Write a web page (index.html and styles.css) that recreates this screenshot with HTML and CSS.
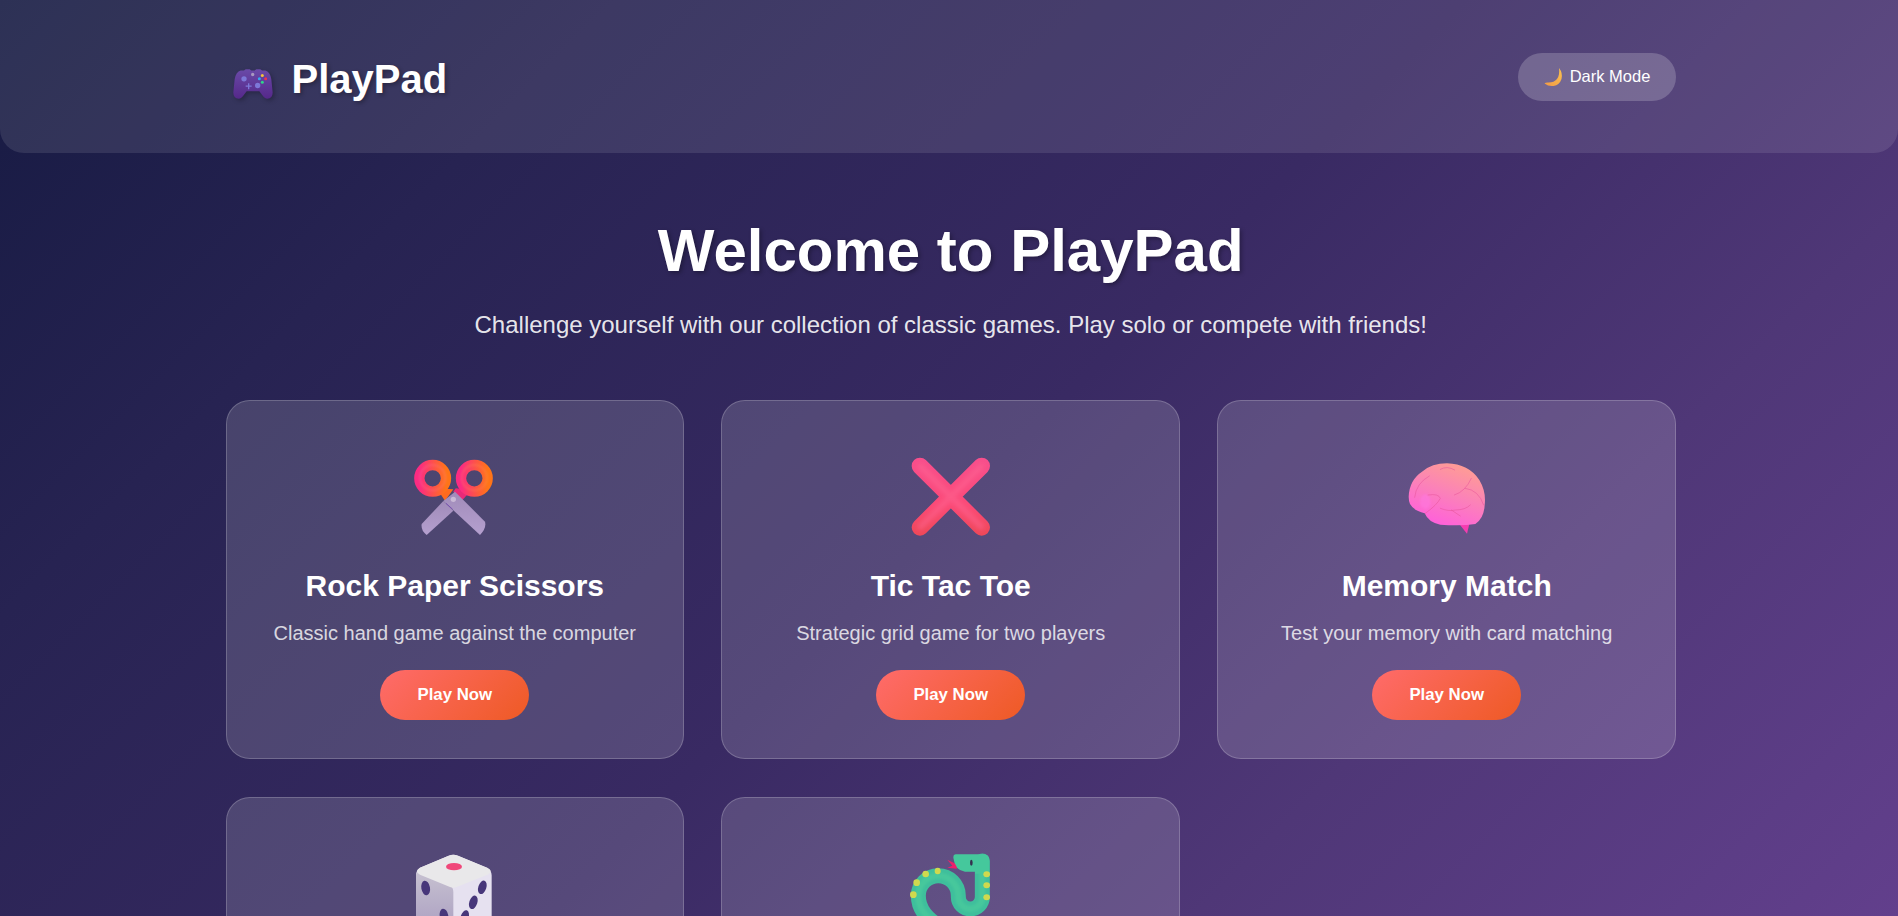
FILE: index.html
```html
<!DOCTYPE html>
<html lang="en">
<head>
<meta charset="utf-8">
<title>PlayPad</title>
<link rel="stylesheet" href="styles.css">
</head>
<body>
<header class="topbar">
  <div class="topbar-inner">
    <div class="logo">
      <svg class="logo-icon" viewBox="78 64.5 180 150" aria-hidden="true">
        <defs>
          <linearGradient id="padGrad" x1="0" y1="0" x2="0" y2="1">
            <stop offset="0" stop-color="#6a4aa8"/><stop offset="1" stop-color="#55288a"/>
          </linearGradient>
        </defs>
        <path d="M122 120h10l5-4h12l5 4h10l5-4h12l5 4h10q14 4 18 26l4 40q0 18-16 19q-8 0-16-12l-8-11h-38l-8 11q-8 12-16 12q-16-1-16-19l4-40q4-22 18-26z" fill="url(#padGrad)"/>
        <circle cx="132" cy="145" r="8" fill="#7d78d8"/>
        <circle cx="173" cy="165" r="8" fill="#7d78d8"/>
        <circle cx="158" cy="132" r="5" fill="#a898c0"/>
        <path d="M146 158v18M137 167h18" stroke="#7d78d8" stroke-width="4" fill="none"/>
        <circle cx="187" cy="135" r="4.500" fill="#f4c33a"/>
        <circle cx="178" cy="145" r="4.500" fill="#35a8f0"/>
        <circle cx="197" cy="145" r="4.500" fill="#f0304f"/>
        <circle cx="187" cy="155" r="4.500" fill="#2fd58a"/>
      </svg>
      <span class="logo-text">PlayPad</span>
    </div>
    <button class="mode-btn" type="button">
      <svg class="mode-icon" viewBox="2 0 22 24" aria-hidden="true">
        <defs>
          <linearGradient id="moonGrad" x1="0" y1="1" x2="1" y2="0">
            <stop offset="0" stop-color="#f29a45"/><stop offset="1" stop-color="#fbc24f"/>
          </linearGradient>
        </defs>
        <path d="M17 3q4 5 2.500 11q-2 6-8 7q-5 .6-9-2.500q1-1 3-1q6 .5 9.500-3.500q3-4 2-11z" fill="url(#moonGrad)"/>
      </svg>
      <span>Dark Mode</span>
    </button>
  </div>
</header>

<main class="page">
  <section class="hero">
    <h1 class="hero-title">Welcome to PlayPad</h1>
    <p class="hero-sub">Challenge yourself with our collection of classic games. Play solo or compete with friends!</p>
  </section>

  <section class="game-grid">
    <article class="card">
      <svg class="card-icon" viewBox="0 0 390 330" aria-hidden="true">
        <defs>
          <linearGradient id="ringGrad" x1="0" y1="0" x2="1" y2="0">
            <stop offset="0" stop-color="#fb2b82"/><stop offset="1" stop-color="#ff7418"/>
          </linearGradient>
          <linearGradient id="bladeGrad" x1="0" y1="0" x2="0" y2="1">
            <stop offset="0" stop-color="#a08bb9"/><stop offset="1" stop-color="#b5a0cf"/>
          </linearGradient>
          <filter id="softBlur"><feGaussianBlur stdDeviation="3"/></filter>
          <filter id="wideBlur"><feGaussianBlur stdDeviation="7"/></filter>
        </defs>
        <path d="M140 145L190 148L165 182z" fill="#ff6a1e"/>
        <path d="M245 150L197 145L190 155L215 182z" fill="#e82a78"/>
        <circle cx="128" cy="115" r="40" fill="none" stroke="url(#ringGrad)" stroke-width="31"/>
        <circle cx="253" cy="115" r="40" fill="none" stroke="url(#ringGrad)" stroke-width="31"/>
        <circle cx="128" cy="113" r="38" fill="none" stroke="#ff7fa8" stroke-width="6" opacity=".25" filter="url(#softBlur)"/>
        <circle cx="253" cy="113" r="38" fill="none" stroke="#ffa060" stroke-width="6" opacity=".25" filter="url(#softBlur)"/>
        <path d="M160 183L190 212L110 285Q92 272 95 252z" fill="url(#bladeGrad)"/>
        <path d="M195 155L285 245Q290 265 270 285L160 183z" fill="url(#bladeGrad)"/>
        <path d="M168 190L188 208" stroke="#7a52b0" stroke-width="3" fill="none"/>
        <circle cx="190" cy="178" r="8" fill="#c9b9d6"/>
      </svg>
      <h2 class="card-title">Rock Paper Scissors</h2>
      <p class="card-desc">Classic hand game against the computer</p>
      <a class="play-btn" href="#">Play Now</a>
    </article>

    <article class="card">
      <svg class="card-icon" viewBox="-12 0 390 330" aria-hidden="true">
        <defs>
          <linearGradient id="xGrad" gradientUnits="userSpaceOnUse" x1="0" y1="53" x2="0" y2="287">
            <stop offset="0" stop-color="#f84f8d"/><stop offset=".6" stop-color="#fb4a78"/><stop offset="1" stop-color="#ee4858"/>
          </linearGradient>
        </defs>
        <path d="M90 78L275 262M275 78L90 262" fill="none" stroke="url(#xGrad)" stroke-width="50" stroke-linecap="round"/>
        <path d="M92 80L273 260M273 80L92 260" fill="none" stroke="#ff6a96" stroke-width="18" stroke-linecap="round" opacity=".45" filter="url(#wideBlur)"/>
      </svg>
      <h2 class="card-title">Tic Tac Toe</h2>
      <p class="card-desc">Strategic grid game for two players</p>
      <a class="play-btn" href="#">Play Now</a>
    </article>

    <article class="card">
      <svg class="card-icon" viewBox="-10 0 390 330" aria-hidden="true">
        <defs>
          <linearGradient id="brainGrad" x1=".8" y1="0" x2=".35" y2="1">
            <stop offset="0" stop-color="#ffa08f"/><stop offset=".5" stop-color="#fb82b8"/><stop offset="1" stop-color="#ff5fdc"/>
          </linearGradient>
        </defs>
        <path d="M220 250L252 252L245 281z" fill="#f53cb0"/>
        <path d="M70 170Q72 120 110 95Q140 70 185 70Q250 72 282 120Q303 155 298 195Q296 235 270 252Q230 258 165 254Q130 248 118 220Q85 212 74 192Q70 182 70 170z" fill="url(#brainGrad)"/>
        <ellipse cx="120" cy="185" rx="16" ry="22" fill="#ff78e0" opacity=".6" filter="url(#softBlur)"/>
        <path d="M88 172Q92 130 132 108M165 88Q185 76 208 90M207 165Q240 155 258 115M240 145Q280 150 295 195M128 165Q160 160 165 175Q155 195 120 220M165 205Q190 215 210 210Q240 210 255 195M198 210L225 228" fill="none" stroke="#e8569a" stroke-width="3" stroke-linecap="round" opacity=".55"/>
      </svg>
      <h2 class="card-title">Memory Match</h2>
      <p class="card-desc">Test your memory with card matching</p>
      <a class="play-btn" href="#">Play Now</a>
    </article>

    <article class="card">
      <svg class="card-icon" viewBox="0 0 390 330" aria-hidden="true">
        <defs>
          <linearGradient id="leftFace" x1="0" y1="0" x2="0" y2="1">
            <stop offset="0" stop-color="#c6c0d0"/><stop offset="1" stop-color="#a89cc0"/>
          </linearGradient>
        </defs>
        <path d="M176 56Q190 50 204 56L290 92Q305 100 305 115V245Q305 250 290 258L200 297Q190 300 180 297L90 258Q78 250 78 245V115Q78 100 90 92z" fill="#e6e1f0"/>
        <path d="M78 115Q78 102 90 108L178 145Q190 150 190 165V300L90 258Q78 250 78 245z" fill="url(#leftFace)"/>
        <path d="M176 56Q190 50 204 56L292 92Q310 100 296 112L200 150Q190 154 180 150L90 113Q72 102 90 92z" fill="#e9e8ea"/>
        <ellipse cx="192" cy="89" rx="24" ry="11" fill="#f0477a"/>
        <ellipse cx="107" cy="153" rx="13" ry="22" transform="rotate(-10 107 153)" fill="#47367a"/>
        <ellipse cx="162" cy="237" rx="13" ry="22" transform="rotate(-10 162 237)" fill="#47367a"/>
        <ellipse cx="277" cy="151" rx="12" ry="21" transform="rotate(18 277 151)" fill="#47367a"/>
        <ellipse cx="250" cy="196" rx="12" ry="21" transform="rotate(18 250 196)" fill="#47367a"/>
        <ellipse cx="224" cy="240" rx="12" ry="21" transform="rotate(18 224 240)" fill="#47367a"/>
      </svg>
      <h2 class="card-title">Dice Roll</h2>
      <p class="card-desc">Roll the dice and test your luck</p>
      <a class="play-btn" href="#">Play Now</a>
    </article>

    <article class="card">
      <svg class="card-icon" viewBox="-12 0 390 330" aria-hidden="true">
        <path d="M172 68L203 83L200 95L172 92L187 86z" fill="#ee1f6b"/>
        <path d="M277 72V180A36 36 0 0 1 205 180V176A60 60 0 0 0 85 176C85 215 110 245 150 268L260 310" fill="none" stroke="#3fbf9c" stroke-width="45" stroke-linecap="round"/>
        <path d="M277 72V180A36 36 0 0 1 205 180V176A60 60 0 0 0 85 176C85 215 110 245 150 268" fill="none" stroke="#4fd09c" stroke-width="18" stroke-linecap="round" opacity=".5" filter="url(#softBlur)"/>
        <path d="M198 52H282Q298 52 298 70V110H255V104H225Q195 100 190 62Q190 52 198 52z" fill="#45c89c"/>
        <ellipse cx="244" cy="77" rx="4" ry="9" fill="#35304f"/>
        <g fill="#cfd94e">
          <ellipse cx="290" cy="112" rx="10" ry="9"/>
          <ellipse cx="290" cy="145" rx="10" ry="9"/>
          <ellipse cx="290" cy="181" rx="10" ry="9"/>
          <ellipse cx="143" cy="102" rx="9" ry="10"/>
          <ellipse cx="107" cy="111" rx="10" ry="10"/>
          <ellipse cx="80" cy="137" rx="10" ry="10"/>
          <ellipse cx="70" cy="173" rx="10" ry="10"/>
        </g>
      </svg>
      <h2 class="card-title">Snake Game</h2>
      <p class="card-desc">Guide the snake and eat the food</p>
      <a class="play-btn" href="#">Play Now</a>
    </article>
  </section>
</main>
</body>
</html>
```

FILE: styles.css
```css
* {
  box-sizing: border-box;
  margin: 0;
  padding: 0;
}

body {
  min-height: 100vh;
  font-family: "Liberation Sans", Arial, sans-serif;
  color: #fff;
  background: linear-gradient(135deg, #161a42 0%, #272352 22%, #392a63 52%, #4f3777 75%, #5c3d86 92%, #623f8c 100%) fixed;
}

.topbar {
  height: 153px;
  background: rgba(255, 255, 255, 0.1);
  border-radius: 0 0 24px 24px;
}

.topbar-inner {
  height: 100%;
  padding: 0 222px 0 225.5px;
  display: flex;
  align-items: center;
  justify-content: space-between;
}

.logo {
  display: flex;
  align-items: center;
  gap: 6px;
}

.logo-icon {
  width: 60px;
  height: 50px;
  filter: drop-shadow(2px 2px 2px rgba(0, 0, 0, 0.25));
}

.logo-text {
  margin-top: 5px;
  font-size: 40px;
  font-weight: 700;
  line-height: 46px;
  text-shadow: 2px 2px 4px rgba(0, 0, 0, 0.3);
}

.mode-btn {
  height: 48px;
  padding: 0 25.6px;
  display: flex;
  align-items: center;
  gap: 4px;
  border: none;
  border-radius: 25px;
  background: rgba(255, 255, 255, 0.2);
  color: #fff;
  font-family: inherit;
  font-size: 16.5px;
}

.mode-icon {
  width: 22px;
  height: 24px;
}

.page {
  padding: 63px 222px 40px 225.5px;
}

.hero {
  text-align: center;
  margin-bottom: 60.5px;
}

.hero-title {
  font-size: 60px;
  line-height: 70px;
  font-weight: 700;
  text-shadow: 2px 2px 4px rgba(0, 0, 0, 0.3);
}

.hero-sub {
  margin-top: 23.5px;
  font-size: 24px;
  line-height: 30px;
  color: rgba(255, 255, 255, 0.9);
}

.game-grid {
  display: grid;
  grid-template-columns: repeat(3, 1fr);
  gap: 37.6px 37.4px;
}

.card {
  display: flex;
  flex-direction: column;
  align-items: center;
  padding: 39px 20px 38.5px;
  text-align: center;
  background: rgba(255, 255, 255, 0.15);
  border: 1px solid rgba(255, 255, 255, 0.2);
  border-radius: 24px;
}

.card-icon {
  width: 130px;
  height: 110px;
  display: block;
}

.card-title {
  margin-top: 19.4px;
  font-size: 30px;
  line-height: 33px;
  font-weight: 700;
}

.card-desc {
  margin-top: 20px;
  font-size: 20px;
  line-height: 22px;
  color: rgba(255, 255, 255, 0.8);
}

.play-btn {
  margin-top: 25.5px;
  width: 149px;
  height: 50px;
  display: flex;
  align-items: center;
  justify-content: center;
  border-radius: 25px;
  background: linear-gradient(135deg, #ff6b6b, #ee5a24);
  color: #fff;
  font-size: 16.8px;
  font-weight: 700;
  text-decoration: none;
}
```
